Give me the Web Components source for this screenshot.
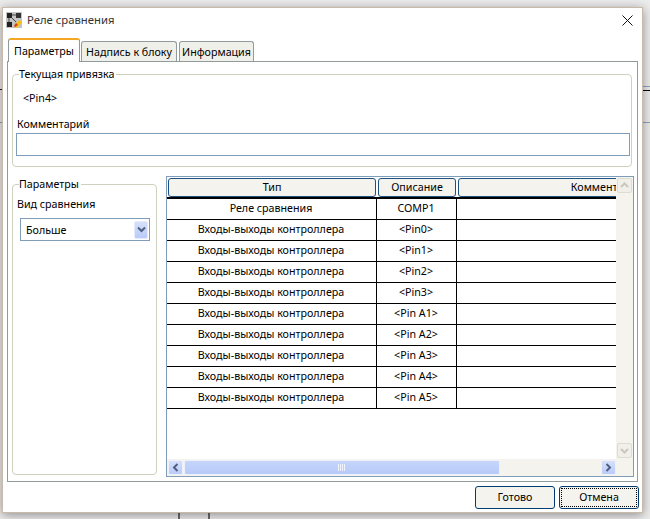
<!DOCTYPE html>
<html>
<head>
<meta charset="utf-8">
<title>Реле сравнения</title>
<style>
  html, body { margin: 0; height: 100%; }
  body {
    background-color: #ececec;
    background-image:
      linear-gradient(#6a6a6a, #6a6a6a), linear-gradient(#6a6a6a, #6a6a6a),
      linear-gradient(#8aa4c0, #8aa4c0), linear-gradient(#000, #000), linear-gradient(#8aa4c0, #8aa4c0),
      linear-gradient(#8aa4c0, #8aa4c0), linear-gradient(#222, #222);
    background-size: 2px 6px, 2px 6px, 7px 1px, 7px 1px, 7px 1px, 2px 1px, 2px 1px;
    background-position: 178px 513px, 208px 513px, 643px 86px, 643px 90px, 643px 122px, 0 122px, 0 89px;
    background-repeat: no-repeat;
    font: 10.7px "Noto Sans", "DejaVu Sans", sans-serif;
    color: #000;
    overflow: hidden;
    padding: 7px 7px 6px 2px;
    box-sizing: border-box;
  }
</style>
</head>
<body>
<relay-dialog></relay-dialog>

<script>
class XGroup extends HTMLElement {
  constructor() {
    super();
    this.attachShadow({ mode: 'open' });
    this.shadowRoot.innerHTML = `
      <style>
        :host {
          display: block;
          box-sizing: border-box;
          border: 1px solid #d0d0bf;
          border-radius: 4px;
          position: relative;
        }
        .title {
          position: absolute;
          top: -8px;
          left: 6px;
          padding: 0 2px 0 0;
          background: #fff;
          line-height: 15px;
        }
      </style>
      <div class="title">${this.getAttribute('title')}</div>
      <slot></slot>
    `;
  }
}

class XButton extends HTMLElement {
  constructor() {
    super();
    this.attachShadow({ mode: 'open' });
    this.shadowRoot.innerHTML = `
      <style>
        :host {
          display: flex;
          align-items: center;
          justify-content: center;
          box-sizing: border-box;
          width: 80px;
          height: 23px;
          border: 1px solid #003c74;
          border-radius: 3px;
          background: #f4f3ee;
          position: relative;
        }
        :host([focused])::after {
          content: '';
          position: absolute;
          inset: 1px;
          border: 1px dotted #000;
        }
      </style>
      <slot></slot>
    `;
  }
}

class XCombo extends HTMLElement {
  constructor() {
    super();
    this.attachShadow({ mode: 'open' });
    this.shadowRoot.innerHTML = `
      <style>
        :host {
          display: flex;
          align-items: center;
          box-sizing: border-box;
          height: 23px;
          border: 1px solid #7f9db9;
          background: #fff;
          padding: 0 1px 0 5px;
        }
        .value { flex: 1; }
        .arrow {
          width: 14px;
          height: 18px;
          display: flex;
          align-items: center;
          justify-content: center;
          background: linear-gradient(#d6e0fb, #b9cbf7);
          border-radius: 2px;
          border: 1px solid #e4ebfd;
          box-sizing: border-box;
        }
      </style>
      <span class="value"><slot></slot></span>
      <span class="arrow">
        <svg width="9" height="7" viewBox="0 0 9 7"><path d="M1 1.500l3.500 3.500L8 1.500" fill="none" stroke="#4d6185" stroke-width="2"/></svg>
      </span>
    `;
  }
}

class XScrollbar extends HTMLElement {
  constructor() {
    super();
    this.attachShadow({ mode: 'open' });
    this.shadowRoot.innerHTML = `
      <style>
        :host {
          display: flex;
          background: #f4f3ee;
          box-sizing: border-box;
        }
        :host([orientation="h"]) { height: 17px; padding: 1px 0 1px 1px; gap: 1px; }
        :host([orientation="v"]) { width: 17px; flex-direction: column; justify-content: space-between; padding: 1px; }
        .btn {
          box-sizing: border-box;
          width: 15px;
          height: 15px;
          flex: none;
          display: flex;
          align-items: center;
          justify-content: center;
          border: 1px solid #eef1f9;
          border-radius: 2px;
          background: linear-gradient(#d6e0fb, #b9cbf7);
        }
        .btn.off { background: #f0efe9; border-color: #dcdcd0; }
        .track { flex: 1; display: flex; align-items: stretch; }
        .thumb {
          box-sizing: border-box;
          width: 316px;
          display: flex;
          align-items: center;
          justify-content: center;
          border: 1px solid #eef1f9;
          border-radius: 2px;
          background: linear-gradient(#c5d5fb, #b7caf8);
        }
      </style>
      ${this.getAttribute('orientation') === 'h' ? `
        <span class="btn"><svg width="7" height="9" viewBox="0 0 7 9"><path d="M5.500 1L2 4.500L5.500 8" fill="none" stroke="#4d6185" stroke-width="2"/></svg></span>
        <span class="track"><span class="thumb">
          <svg width="8" height="7" viewBox="0 0 8 7"><path d="M.5 0v7M2.500 0v7M4.500 0v7M6.500 0v7" stroke="#eef3fe" stroke-width="1"/></svg>
        </span></span>
        <span class="btn"><svg width="7" height="9" viewBox="0 0 7 9"><path d="M1.500 1L5 4.500L1.500 8" fill="none" stroke="#4d6185" stroke-width="2"/></svg></span>
      ` : `
        <span class="btn off"><svg width="9" height="7" viewBox="0 0 9 7"><path d="M1 5l3.500-3.500L8 5" fill="none" stroke="#c9c8bd" stroke-width="2"/></svg></span>
        <span class="btn off"><svg width="9" height="7" viewBox="0 0 9 7"><path d="M1 2l3.500 3.500L8 2" fill="none" stroke="#c9c8bd" stroke-width="2"/></svg></span>
      `}
    `;
  }
}

const ROWS = [
  ['Реле сравнения', 'COMP1'],
  ['Входы-выходы контроллера', '<Pin0>'],
  ['Входы-выходы контроллера', '<Pin1>'],
  ['Входы-выходы контроллера', '<Pin2>'],
  ['Входы-выходы контроллера', '<Pin3>'],
  ['Входы-выходы контроллера', '<Pin A1>'],
  ['Входы-выходы контроллера', '<Pin A2>'],
  ['Входы-выходы контроллера', '<Pin A3>'],
  ['Входы-выходы контроллера', '<Pin A4>'],
  ['Входы-выходы контроллера', '<Pin A5>']
];

function escapeText(text) {
  return text.replace(/</g, '&lt;').replace(/>/g, '&gt;');
}

class XGrid extends HTMLElement {
  constructor() {
    super();
    this.attachShadow({ mode: 'open' });
    const rows = ROWS.map(row => `
      <div class="row">
        <div class="cell">${escapeText(row[0])}</div>
        <div class="cell">${escapeText(row[1])}</div>
        <div class="cell last"></div>
      </div>`).join('');
    this.shadowRoot.innerHTML = `
      <style>
        :host {
          display: grid;
          grid-template-columns: 1fr 17px;
          grid-template-rows: 1fr 17px;
          box-sizing: border-box;
          border: 1px solid #7f9db9;
          background: #fff;
        }
        .body { overflow: hidden; min-width: 0; }
        .head, .row {
          display: grid;
          grid-template-columns: 210px 80px 300px;
          width: 590px;
        }
        .head { height: 22px; padding-top: 1px; box-sizing: border-box; border-bottom: 2px solid #000; }
        .hcell {
          box-sizing: border-box;
          margin: 0 1px;
          height: 19px;
          padding-bottom: 2px;
          border: 1px solid #1c5180;
          border-radius: 3px;
          background: #f4f3ee;
          display: flex;
          align-items: center;
          justify-content: center;
          white-space: nowrap;
          overflow: hidden;
        }
        .row { height: 21px; }
        .row:first-of-type { height: 20px; }
        .cell {
          box-sizing: border-box;
          padding: 0 1px 2px 0;
          border-bottom: 1px solid #000;
          border-right: 1px solid #000;
          display: flex;
          align-items: center;
          justify-content: center;
        }
        .cell.last { border-right: 0; }
        .corner { background: #f4f3ee; }
      </style>
      <div class="body">
        <div class="head">
          <div class="hcell">Тип</div>
          <div class="hcell">Описание</div>
          <div class="hcell">Комментарий</div>
        </div>
        ${rows}
      </div>
      <x-scrollbar orientation="v"></x-scrollbar>
      <x-scrollbar orientation="h"></x-scrollbar>
      <div class="corner"></div>
    `;
  }
}

class RelayDialog extends HTMLElement {
  constructor() {
    super();
    this.attachShadow({ mode: 'open' });
    this.shadowRoot.innerHTML = `
      <style>
        :host {
          display: flex;
          flex-direction: column;
          box-sizing: border-box;
          height: 506px;
          border: 1px solid #c9b9a8;
          background: #fff;
          box-shadow: 0 2px 10px rgba(0, 0, 0, 0.4);
        }
        .titlebar {
          display: flex;
          align-items: center;
          height: 28px;
          padding: 0 9px 4px 3px;
          box-sizing: border-box;
          flex: none;
        }
        .titlebar .name { flex: 1; margin-left: 5px; padding-bottom: 2px; font-size: 11.3px; color: #333; }
        .tabs { display: flex; align-items: flex-end; height: 25px; padding-left: 5px; flex: none; }
        .tab {
          box-sizing: border-box;
          height: 20px;
          display: flex;
          align-items: center;
          justify-content: center;
          border: 1px solid #919b9c;
          border-bottom: 0;
          border-radius: 3px 3px 0 0;
          background: #f0f0ea;
        }
        .tab.active {
          height: 24px;
          margin: 0 1px -1px 0;
          background: #fff;
          border-top: 2px solid #f5a623;
          position: relative;
        }
        .panel {
          box-sizing: border-box;
          margin: 0 4px;
          height: 421px;
          border: 1px solid #919b9c;
          padding: 12px 3px 4px 4px;
          display: flex;
          flex-direction: column;
        }
        .top { height: 93px; flex: none; margin-right: 2px; padding: 0 1px 0 3px; }
        .pin { margin: 15px 0 0 7px; line-height: 16px; }
        .comment-label { margin: 10px 0 0 1px; line-height: 16px; }
        .input { height: 23px; border: 1px solid #7f9db9; box-sizing: border-box; margin-top: 1px; }
        .bottom { flex: 1; display: flex; gap: 9px; margin-top: 9px; min-height: 0; }
        .params { width: 145px; flex: none; margin-top: 8px; margin-bottom: 2px; padding: 12px 6px 0 4px; }
        .params .label { line-height: 15px; }
        .params x-combo { margin: 6px 0 0 3px; }
        x-grid { flex: 1; min-width: 0; }
        .actions {
          flex: 1;
          display: flex;
          justify-content: flex-end;
          align-items: center;
          gap: 4px;
          padding: 0 3px 0 0;
        }
      </style>
      <div class="titlebar">
        <svg width="16" height="16" viewBox="0 0 16 16">
          <rect width="16" height="16" fill="#c4c4c4"/>
          <rect x="1" y="1" width="5" height="5" fill="#222"/>
          <rect x="10" y="1" width="5" height="5" fill="#333"/>
          <rect x="1" y="10" width="5" height="5" fill="#222"/>
          <path d="M6 3h4M3 6v4M6 6l4 4" stroke="#444" fill="none"/>
          <path d="M8 14l2-3 4-3 2 2-3 4-3 2z" fill="#f4c20d"/>
          <path d="M8 14l2-3 2 2-3 2z" fill="#d9342b"/>
        </svg>
        <span class="name">Реле сравнения</span>
        <svg width="11" height="11" viewBox="0 0 11 11"><path d="M.5 .5l10 10M10.500 .5l-10 10" stroke="#111" stroke-width="1" fill="none"/></svg>
      </div>
      <div class="tabs">
        <div class="tab active" style="width:72px">Параметры</div>
        <div class="tab" style="width:96px;margin-right:2px">Надпись к блоку</div>
        <div class="tab" style="width:75px">Информация</div>
      </div>
      <div class="panel">
        <x-group class="top" title="Текущая привязка">
          <div class="pin">&lt;Pin4&gt;</div>
          <div class="comment-label">Комментарий</div>
          <div class="input"></div>
        </x-group>
        <div class="bottom">
          <x-group class="params" title="Параметры">
            <div class="label">Вид сравнения</div>
            <x-combo>Больше</x-combo>
          </x-group>
          <x-grid></x-grid>
        </div>
      </div>
      <div class="actions">
        <x-button>Готово</x-button>
        <x-button focused>Отмена</x-button>
      </div>
    `;
  }
}

customElements.define('x-group', XGroup);
customElements.define('x-button', XButton);
customElements.define('x-combo', XCombo);
customElements.define('x-scrollbar', XScrollbar);
customElements.define('x-grid', XGrid);
customElements.define('relay-dialog', RelayDialog);
</script>
</body>
</html>
